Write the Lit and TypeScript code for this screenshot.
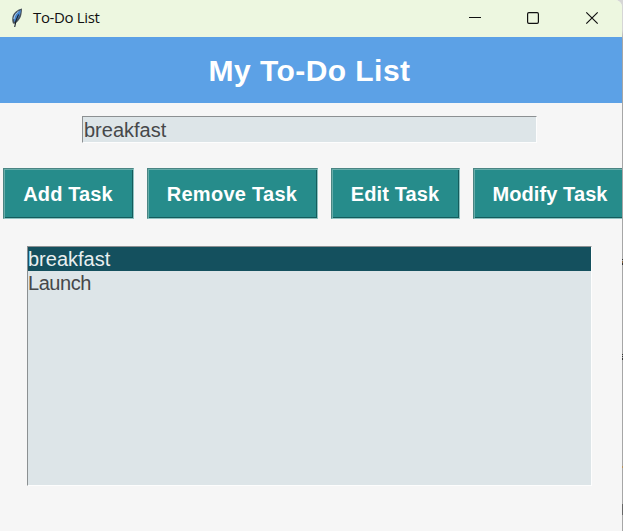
import { LitElement, html, css, svg } from "lit";
import { customElement, state } from "lit/decorators.js";
import { classMap } from "lit/directives/class-map.js";

@customElement("app-root")
export class AppRoot extends LitElement {
  @state() private tasks = ["breakfast", "Launch"];
  @state() private selected = 0;

  static styles = css`
    * { box-sizing: border-box; }
    :host {
      display: block;
      width: 623px;
      height: 531px;
      overflow: hidden;
      background: linear-gradient(
        #d6d6d6 30px, #a6a6a6 40px 259px, #333 259px 260px, #a6a6a6 260px 261px,
        #86603c 261px 263px, #333 263px 265px, #a6a6a6 265px 354px, #333 354px 355px,
        #a6a6a6 355px 356px, #333 356px 357px, #a6a6a6 357px 358px, #333 358px 360px,
        #a6a6a6 360px 466px, #b8935c 466px 468px, #a6a6a6 468px 504px,
        #666 504px 515px, #a6a6a6 515px
      );
      font-family: "Liberation Sans", Arial, sans-serif;
    }
    .window {
      width: 622px;
      height: 531px;
      overflow: hidden;
      background: #f6f6f6;
      border-top-right-radius: 7px;
      display: flex;
      flex-direction: column;
    }
    .titlebar {
      height: 37px;
      flex: none;
      display: flex;
      align-items: center;
      background: #edf7e0;
      padding-left: 9px;
    }
    .feather { width: 16px; height: 22px; margin-top: -4px; }
    .name {
      flex: 1;
      margin-left: 8px;
      font: 15px/20px "Open Sans", "Noto Sans", sans-serif;
      letter-spacing: -0.35px;
      color: #111;
      margin-top: -3px;
    }
    .controls { display: flex; margin-right: 1px; }
    .control { width: 58px; height: 37px; display: block; }
    .banner {
      height: 66px;
      flex: none;
      background: #5ca1e6;
      color: #fff;
      font-size: 30px;
      font-weight: bold;
      line-height: 67px;
      letter-spacing: 0.45px;
      text-align: center;
      padding-right: 3px;
    }
    .entry {
      margin: 13px 0 0 82px;
      width: 455px;
      height: 27px;
      flex: none;
      padding: 2px 0 0 1px;
      border: 1px solid #fdfdfd;
      border-top-color: #8c9092;
      border-left-color: #8c9092;
      border-radius: 0;
      outline: none;
      background: #dde5e8;
      color: #46484a;
      font: 20px/23px "Liberation Sans", Arial, sans-serif;
    }
    .buttons { display: flex; gap: 13px; margin: 25px 0 0 3px; flex: none; }
    .btn {
      flex: none;
      height: 51px;
      padding: 0 1px 0 0;
      border: 1px solid;
      border-color: #4b8583 #8fc4c2 #8fc4c2 #4b8583;
      box-shadow: inset 1px 1px #67adaa, inset -1px -1px #145c5c;
      background: #268c8b;
      color: #fff;
      font: bold 20px/48px "Liberation Sans", Arial, sans-serif;
      letter-spacing: 0.1px;
      white-space: nowrap;
    }
    .w131 { width: 131px; }
    .w171 { width: 171px; letter-spacing: 0.27px; }
    .w129 { width: 129px; }
    .w155 { width: 155px; }
    .list {
      margin: 27px 0 0 27px;
      width: 565px;
      height: 240px;
      flex: none;
      border: 1px solid #fdfdfd;
      border-top-color: #8c9092;
      border-left-color: #8c9092;
      background: #dde5e8;
      color: #46484a;
      font-size: 20px;
    }
    .row { height: 24px; line-height: 24px; }
    .row:not(.selected) { letter-spacing: -0.45px; }
    .row.selected { background: #14505e; color: #e9eff0; }
  `;

  private feather() {
    return svg`<svg class="feather" viewBox="0 0 16 22">
      <path d="M13 2.600C8.600 3.400 4.400 6.800 3.400 11.300c-.4 2.200-.2 4.300.6 6.200l1.300.3c3.600-1.600 6.300-5.400 7.100-9.400.4-2 .7-4 .6-5.800z" fill="#47525c"/>
      <path d="M12 4C8.200 5.500 5.200 9 4.700 12.300l.4 3.700C8.700 13.500 11.500 9.200 12 4z" fill="#4786cf"/>
      <path d="M9.500 5.300C6.800 7.400 5.200 10 4.900 13" fill="none" stroke="#b4cfe6" stroke-width="1"/>
      <path d="M9.600 8.500C7.500 12 6.200 15.600 5.700 21" fill="none" stroke="#17202b" stroke-width="1.100"/>
    </svg>`;
  }

  render() {
    const actions = [
      ["Add Task", "w131"],
      ["Remove Task", "w171"],
      ["Edit Task", "w129"],
      ["Modify Task", "w155"],
    ];
    return html`
      <div class="window">
        <header class="titlebar">
          ${this.feather()}
          <span class="name">To-Do List</span>
          <div class="controls">
            <svg class="control" viewBox="0 0 58 37"><path d="M22 17.500h12" stroke="#111"/></svg>
            <svg class="control" viewBox="0 0 58 37"><rect x="22.600" y="12.600" width="10.800" height="10.800" rx="1.300" fill="none" stroke="#111" stroke-width="1.200"/></svg>
            <svg class="control" viewBox="0 0 58 37"><path d="M23.300 12.300l11.400 11.400M34.700 12.300L23.300 23.700" stroke="#111" stroke-width="1.200"/></svg>
          </div>
        </header>
        <div class="banner">My To-Do List</div>
        <input class="entry" .value=${"breakfast"} spellcheck="false" />
        <div class="buttons">
          ${actions.map(([label, w]) => html`<button class="btn ${w}">${label}</button>`)}
        </div>
        <div class="list">
          ${this.tasks.map(
            (task, i) => html`<div
              class=${classMap({ row: true, selected: i === this.selected })}
              @click=${() => (this.selected = i)}
            >${task}</div>`
          )}
        </div>
      </div>
    `;
  }
}
